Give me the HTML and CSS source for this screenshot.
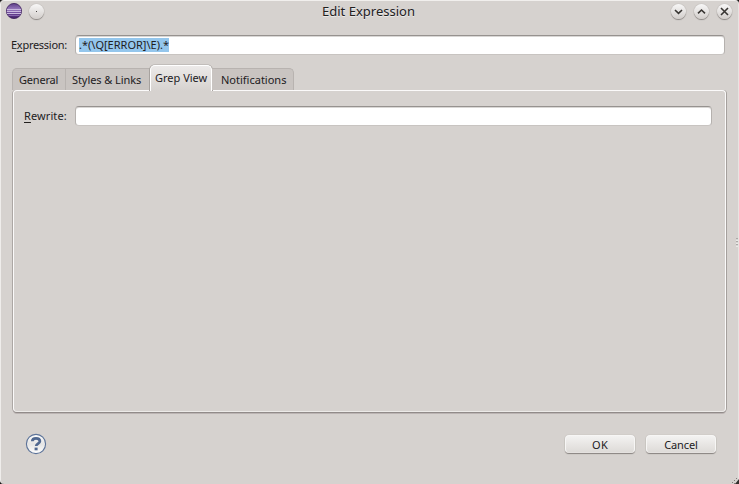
FILE: index.html
```html
<!DOCTYPE html>
<html lang="en">
<head>
<meta charset="utf-8">
<title>Edit Expression</title>
<link rel="stylesheet" href="styles.css">
</head>
<body>
<div class="backdrop">
<main class="dialog">
  <header class="titlebar">
    <div class="controls">
      <svg class="logo" width="16" height="16" viewBox="0 0 16 16">
        <defs>
          <linearGradient id="purple" x2="0" y2="1"><stop offset="0" stop-color="#5c3c86"/><stop offset=".4" stop-color="#9a7cc0"/><stop offset=".65" stop-color="#6a4596"/><stop offset="1" stop-color="#402065"/></linearGradient>
        </defs>
        <circle cx="8" cy="8" r="7.6" fill="url(#purple)" stroke="#3c1e5c" stroke-width=".8"/>
        <path d="M1 6.5h14M.8 8.5h14.4M1 10.5h14" stroke="#c9b8de" stroke-width="1"/>
        <path d="M2 4.5h6M2.5 12.5h11" stroke="#8868ae" stroke-width="1"/>
      </svg>
      <span class="round"><svg width="15" height="15" viewBox="0 0 15 15"><path class="dot" d="M7 7h1v1H7z"/></svg></span>
    </div>
    <h1 class="title">Edit Expression</h1>
    <div class="controls right">
      <span class="round"><svg width="15" height="15" viewBox="0 0 15 15"><path class="glyph" d="M4 6l3.5 3.3L11 6"/></svg></span>
      <span class="round"><svg width="15" height="15" viewBox="0 0 15 15"><path class="glyph" d="M4 9.3L7.5 6 11 9.3"/></svg></span>
      <span class="round"><svg width="15" height="15" viewBox="0 0 15 15"><path class="glyph" d="M4 4l7 7M11 4l-7 7"/></svg></span>
    </div>
  </header>

  <div class="row expression">
    <label class="label t-expression">E<u>x</u>pression:</label>
    <div class="field"><span class="selection">.*(\Q[ERROR]\E).*</span></div>
  </div>

  <nav class="tabs">
    <div class="tab general"><span class="t-general">General</span></div>
    <div class="tab styles"><span class="t-styles">Styles &amp; Links</span></div>
    <div class="tab active"><span>Grep View</span></div>
    <div class="tab notifications"><span>Notifications</span></div>
  </nav>

  <section class="panel">
    <div class="row">
      <label class="label t-rewrite"><u>R</u>ewrite:</label>
      <div class="field"></div>
    </div>
  </section>

  <footer class="footer">
    <svg class="help" width="22" height="22" viewBox="0 0 22 22">
      <defs><linearGradient id="pale" x2="0" y2="1"><stop offset="0" stop-color="#fff"/><stop offset=".5" stop-color="#e4e4e4"/><stop offset="1" stop-color="#fff"/></linearGradient></defs>
      <circle cx="11" cy="11" r="9.6" fill="url(#pale)" stroke="#5c7399" stroke-width="1.1"/>
      <path d="M7.3 8.3C7.3 6 9 5.3 11 5.3s3.9 1 3.9 2.9c0 2.4-3.7 2.3-3.7 4.8" fill="none" stroke="#506890" stroke-width="2.7"/>
      <path d="M9.6 14.6h3v2.7h-3z" fill="#506890"/>
    </svg>
    <div class="button"><span class="t-ok">OK</span></div>
    <div class="button"><span class="t-cancel">Cancel</span></div>
  </footer>
  <svg class="grip" width="3" height="9" viewBox="0 0 3 9"><path d="M0 1h2M0 4h2M0 7h2" stroke="#85817e"/><path d="M0 2h2M0 5h2M0 8h2" stroke="#fff"/></svg>
  <svg class="corner" width="7" height="7" viewBox="0 0 7 7"><path d="M7 2v5H3z" fill="#34302e"/><path d="M0 5h1v1H0zM2 3h1v1H2zM4 1h1v1H4zM2 6h1v1H2z" fill="#817d7a"/></svg>
</main>
</div>
</body>
</html>
```
FILE: styles.css
```css
* { box-sizing: border-box; }
body { margin: 0; overflow: hidden; font: 11px/14px "Noto Sans", "Open Sans", sans-serif; color: #22201e; }
.backdrop { width: 739px; height: 484px; background: #181615; }
.dialog {
  position: relative;
  height: 484px;
  background: #d6d2cf;
  border-radius: 4px;
  border-left: 1px solid #efedeb;
  border-top: 1px solid #f1efed;
  border-right: 1px solid #e7e4e2;
}
.titlebar { height: 34px; display: grid; grid-template-columns: 1fr auto 1fr; padding: 2px 7px 0 5px; }
.controls { display: flex; gap: 8px; height: 16px; align-items: center; }
.controls .logo { margin-right: -1px; }
.right { justify-content: flex-end; margin-right: -1px; }
.logo { display: block; }
.round {
  width: 15px; height: 15px; border-radius: 50%;
  background: linear-gradient(#f8f7f7, #d2cecb);
  box-shadow: 0 0 1px #96918e, 0 1px 1px #8a8582;
}
.round svg { display: block; }
.dot { fill: #45413e; }
.glyph { fill: none; stroke: #383532; stroke-width: 1.6; }
.title { margin: 0; font-size: 13px; line-height: 17px; font-weight: 400; white-space: nowrap; text-shadow: 0 1px #eceae8; }
.row { display: flex; align-items: center; }
.expression { padding: 0 13px 0 10px; }
.label { width: 64px; flex: none; white-space: nowrap; }
.label u { text-underline-offset: 2px; text-decoration-thickness: 1px; }
.field {
  flex: 1; height: 20px; padding: 2px 3px;
  background: #fff; border: 1px solid #b5b1ae; border-top-color: #96928f; border-bottom-color: #c8c4c1;
  border-radius: 4px; box-shadow: inset 0 1px #d9d7d5;
}
.selection { display: block; width: 90px; height: 14px; line-height: 14px; background: #94c6ec; white-space: nowrap; }
.tabs { display: flex; align-items: flex-end; height: 25px; margin: 10px 0 0 11px; position: relative; z-index: 1; }
.tab {
  height: 22px; padding: 4px 0 0 6px; background: #c9c4c1;
  border: 1px solid #b8b3b0; border-left: 0; border-bottom: 0; white-space: nowrap;
}
.general { width: 54px; border-left: 1px solid #b8b3b0; border-radius: 5px 0 0 0; }
.styles { width: 84px; border-right: 0; }
.active {
  width: 62px; height: 26px; margin-bottom: -1px; padding: 5px 0 0 4px;
  background: linear-gradient(#eceae9, #d6d2cf); border: 1px solid #fff; border-bottom: 0;
  border-radius: 5px 5px 0 0; box-shadow: -1px 0 #a7a29f, 1px 0 #a7a29f, 0 -1px #c1bdba;
}
.notifications { width: 82px; padding-left: 9px; border-radius: 0 5px 0 0; }
.panel {
  height: 322px; margin: 0 12px 0 12px; padding: 15px 13px 0 10px;
  border: 1px solid #fbfafa; border-bottom-color: #eceae8; border-radius: 4px;
  box-shadow: 1px 0 #a5a09d, 0 1px #918b89, 0 2px #bbb4b3, -1px 0 #aca7a4;
}
.panel .label { width: 51px; }
.footer { display: flex; align-items: center; padding: 21px 22px 0 24px; gap: 11px; }
.help { margin-right: auto; }
.button {
  width: 70px; height: 18px; border: 1px solid #f7f6f5; border-bottom-color: #e4e1df; border-radius: 4px;
  background: linear-gradient(#f3f2f1, #dedbd8); box-shadow: 0 0 1px #a39e9b, 0 1px 1px #85807d;
  text-align: center; line-height: 17px;
}
.grip { position: absolute; right: -1px; top: 237px; }
.corner { position: absolute; right: -1px; bottom: 0; }
.t-expression { letter-spacing: -.28px; }
.t-rewrite { letter-spacing: .1px; }
.t-general { letter-spacing: -.2px; }
.t-styles { letter-spacing: -.08px; }
.t-cancel { letter-spacing: -.1px; }
.t-ok { letter-spacing: .2px; }
```
